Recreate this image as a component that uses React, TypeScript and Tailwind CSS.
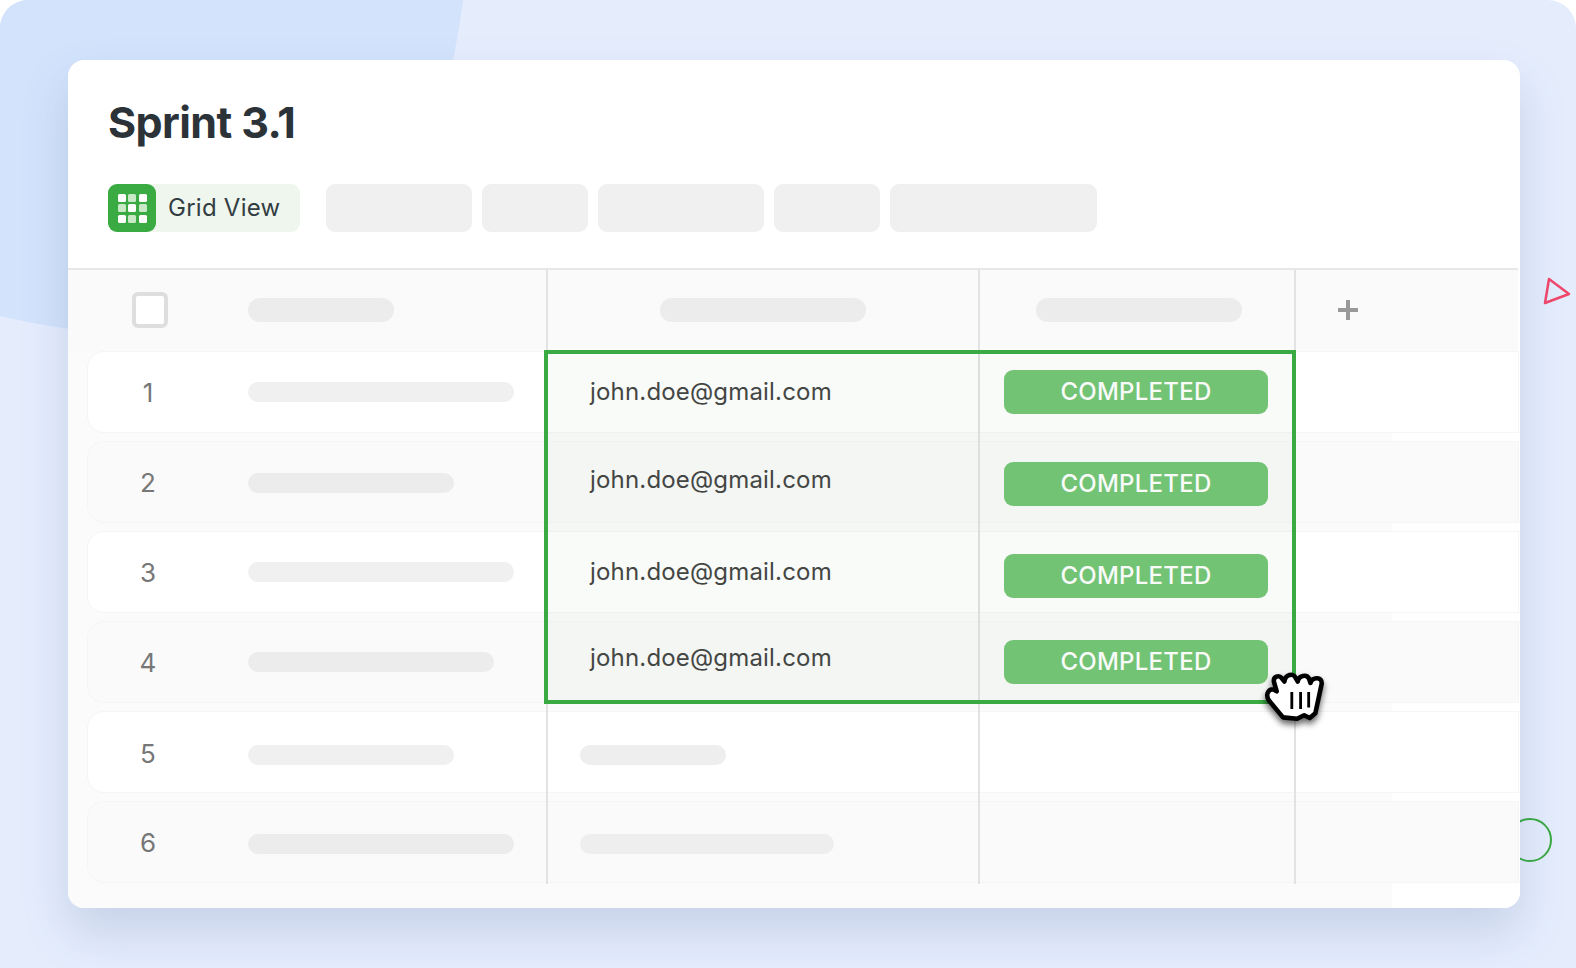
const rows = [
    { num: '1', bg: 'bg-white', numTop: 'pt-[25px]', skelTop: 'mt-[30px]', skelWidth: 'w-[266px]', skelColor: 'bg-[#f0f0f0]', emailTop: 'pt-[25px]', badgeTop: 'mt-[18px]', email: true },
    { num: '2', bg: 'bg-[#fafafa]', numTop: 'pt-[25px]', skelTop: 'mt-[31px]', skelWidth: 'w-[206px]', skelColor: 'bg-[#ececec]', emailTop: 'pt-[23px]', badgeTop: 'mt-[20px]', email: true },
    { num: '3', bg: 'bg-white', numTop: 'pt-[25px]', skelTop: 'mt-[30px]', skelWidth: 'w-[266px]', skelColor: 'bg-[#f0f0f0]', emailTop: 'pt-[25px]', badgeTop: 'mt-[22px]', email: true },
    { num: '4', bg: 'bg-[#fafafa]', numTop: 'pt-[25px]', skelTop: 'mt-[30px]', skelWidth: 'w-[246px]', skelColor: 'bg-[#ececec]', emailTop: 'pt-[21px]', badgeTop: 'mt-[18px]', email: true },
    { num: '5', bg: 'bg-white', numTop: 'pt-[26px]', skelTop: 'mt-[33px]', skelWidth: 'w-[206px]', skelColor: 'bg-[#f0f0f0]', colTwo: 'w-[146px]', email: false },
    { num: '6', bg: 'bg-[#fafafa]', numTop: 'pt-[25px]', skelTop: 'mt-[32px]', skelWidth: 'w-[266px]', skelColor: 'bg-[#ececec]', colTwo: 'w-[254px]', email: false },
];

const tabs = ['w-[146px]', 'w-[106px]', 'w-[166px]', 'w-[106px]', 'w-[207px]'];

function GridIcon() {
    const cells = [true, false, true, false, true, false, true, false, true];
    return (
        <div className="flex h-[48px] w-[48px] items-center justify-center rounded-[9px] bg-[#3aaa42]">
            <div className="grid grid-cols-3 gap-[2.5px]">
                {cells.map((on, idx) => (
                    <div
                        key={idx}
                        className={on ? 'h-[8px] w-[8px] rounded-[1.5px] bg-white' : 'h-[8px] w-[8px] rounded-[1.5px] bg-[#c9e8c6]'}
                    />
                ))}
            </div>
        </div>
    );
}

function GrabCursor() {
    return (
        <svg
            viewBox="255 145 185 170"
            className="absolute left-[1263px] top-[667px] h-[60px] w-[65px] drop-shadow-[0_4px_3px_rgba(0,0,0,0.6)]"
        >
            <path
                d="M312 288 L272 240 C262 226 268 208 284 208 L294 214 L286 186 C284 172 300 166 308 176 L316 186 C318 166 342 160 348 176 L354 186 C356 168 380 164 386 178 L390 190 C396 172 424 172 422 192 L404 276 L388 290 L372 282 L352 292 Z"
                fill="#ffffff"
                stroke="#000000"
                strokeWidth="13"
                strokeLinejoin="round"
            />
            <path d="M337 216 V264 M362 216 V264 M385 216 V260" stroke="#000000" strokeWidth="8" fill="none" />
        </svg>
    );
}

export default function App() {
    return (
        <div className="relative h-[968px] w-[1576px] overflow-hidden bg-white font-['Inter',sans-serif]">
            <div className="relative h-[968px] overflow-hidden rounded-t-[28px] bg-[#e5edfd] pl-[68px] pt-[60px]">
                {/* BACKGROUND SHAPES */}
                <svg viewBox="0 0 1576 968" className="absolute left-0 top-0 h-[968px] w-[1576px]">
                    <path d="M0 0 H463 C460 25 456 45 451 70 L420 340 C300 345 120 345 0 316 Z" fill="#d3e3fc" />
                    <polygon points="1549,279 1569,294 1545,303" fill="none" stroke="#f0476c" strokeWidth="2.5" strokeLinejoin="round" />
                    <circle cx="1530" cy="840" r="21" fill="none" stroke="#3aaa42" strokeWidth="2" />
                </svg>

                {/* CARD */}
                <div className="relative h-[848px] w-[1452px] overflow-hidden rounded-2xl bg-white shadow-[0_24px_48px_rgba(60,90,140,0.18)]">
                    <h1 className="ml-[40px] mt-[35px] text-[43px] font-bold leading-[54px] tracking-[-0.6px] text-[#2b3338]">Sprint 3.1</h1>

                    {/* TABS */}
                    <section className="ml-[40px] mt-[35px] flex">
                        <div className="flex h-[48px] w-[192px] items-center rounded-[9px] bg-[#eef6ee]">
                            <GridIcon />
                            <span className="ml-[12px] text-[24px] tracking-[0.25px] text-[#333d42]">Grid View</span>
                        </div>
                        <div className="ml-[26px] flex gap-[10px]">
                            {tabs.map((width, idx) => (
                                <div key={idx} className={`h-[48px] rounded-[9px] bg-[#f0f0f0] ${width}`} />
                            ))}
                        </div>
                    </section>

                    {/* TABLE HEADER */}
                    <section className="mr-[2px] mt-[36px] flex h-[84px] border-t-2 border-[#e8e8e8] bg-[#fafafa]">
                        <div className="ml-[64px] mt-[22px] h-[36px] w-[36px] rounded-[6px] border-4 border-[#dedede] bg-white" />
                        <div className="ml-[80px] mt-[28px] h-[24px] w-[146px] rounded-full bg-[#ececec]" />
                        <div className="ml-[266px] mt-[28px] h-[24px] w-[206px] rounded-full bg-[#ececec]" />
                        <div className="ml-[170px] mt-[28px] h-[24px] w-[206px] rounded-full bg-[#ececec]" />
                        <div className="ml-[95px] mt-[29px] text-[#999999]">
                            <svg viewBox="0 0 22 22" className="h-[22px] w-[22px]">
                                <path d="M11 1 V21 M1 11 H21" stroke="currentColor" strokeWidth="4" />
                            </svg>
                        </div>
                    </section>

                    {/* TABLE BODY */}
                    <section className="flex h-[556px] flex-col gap-[10px] bg-[linear-gradient(90deg,#fbfbfb_1324px,#ffffff_1324px)] pl-[20px] pr-[2px]">
                        {rows.map((row) => (
                            <div key={row.num} className={`flex h-[80px] shrink-0 rounded-l-2xl shadow-[0_0_0_1px_#f5f5f5] ${row.bg}`}>
                                <div className={`w-[120px] text-center text-[26px] leading-[32px] text-[#777777] ${row.numTop}`}>{row.num}</div>
                                <div className="ml-[40px] w-[300px]">
                                    <div className={`h-[20px] rounded-full ${row.skelColor} ${row.skelTop} ${row.skelWidth}`} />
                                </div>
                                <div className="w-[432px] pl-[42px]">
                                    {row.email ? (
                                        <div className={`text-[24px] leading-[30px] tracking-[0.18px] text-[#444444] ${row.emailTop}`}>john.doe@gmail.com</div>
                                    ) : (
                                        <div className={`ml-[-10px] h-[20px] rounded-full bg-[#eeeeee] ${row.skelTop} ${row.colTwo}`} />
                                    )}
                                </div>
                                <div className="ml-[24px] w-[264px]">
                                    {row.email && (
                                        <div className={`flex h-[44px] items-center justify-center rounded-[9px] bg-[#75c577] text-[24px] font-medium tracking-[0.25px] text-white ${row.badgeTop}`}>
                                            COMPLETED
                                        </div>
                                    )}
                                </div>
                            </div>
                        ))}
                    </section>

                    {/* COLUMN LINES */}
                    <div className="absolute left-[478px] top-[210px] h-[614px] w-[2px] bg-[#e2e2e2]" />
                    <div className="absolute left-[910px] top-[210px] h-[614px] w-[2px] bg-[#e2e2e2]" />
                    <div className="absolute left-[1226px] top-[210px] h-[614px] w-[2px] bg-[#e2e2e2]" />

                    {/* SELECTION */}
                    <div className="absolute left-[476px] top-[290px] h-[354px] w-[752px] border-4 border-[#3aaa42] bg-[#5a9a50]/[0.035]" />
                </div>

                <GrabCursor />
            </div>
        </div>
    );
}
